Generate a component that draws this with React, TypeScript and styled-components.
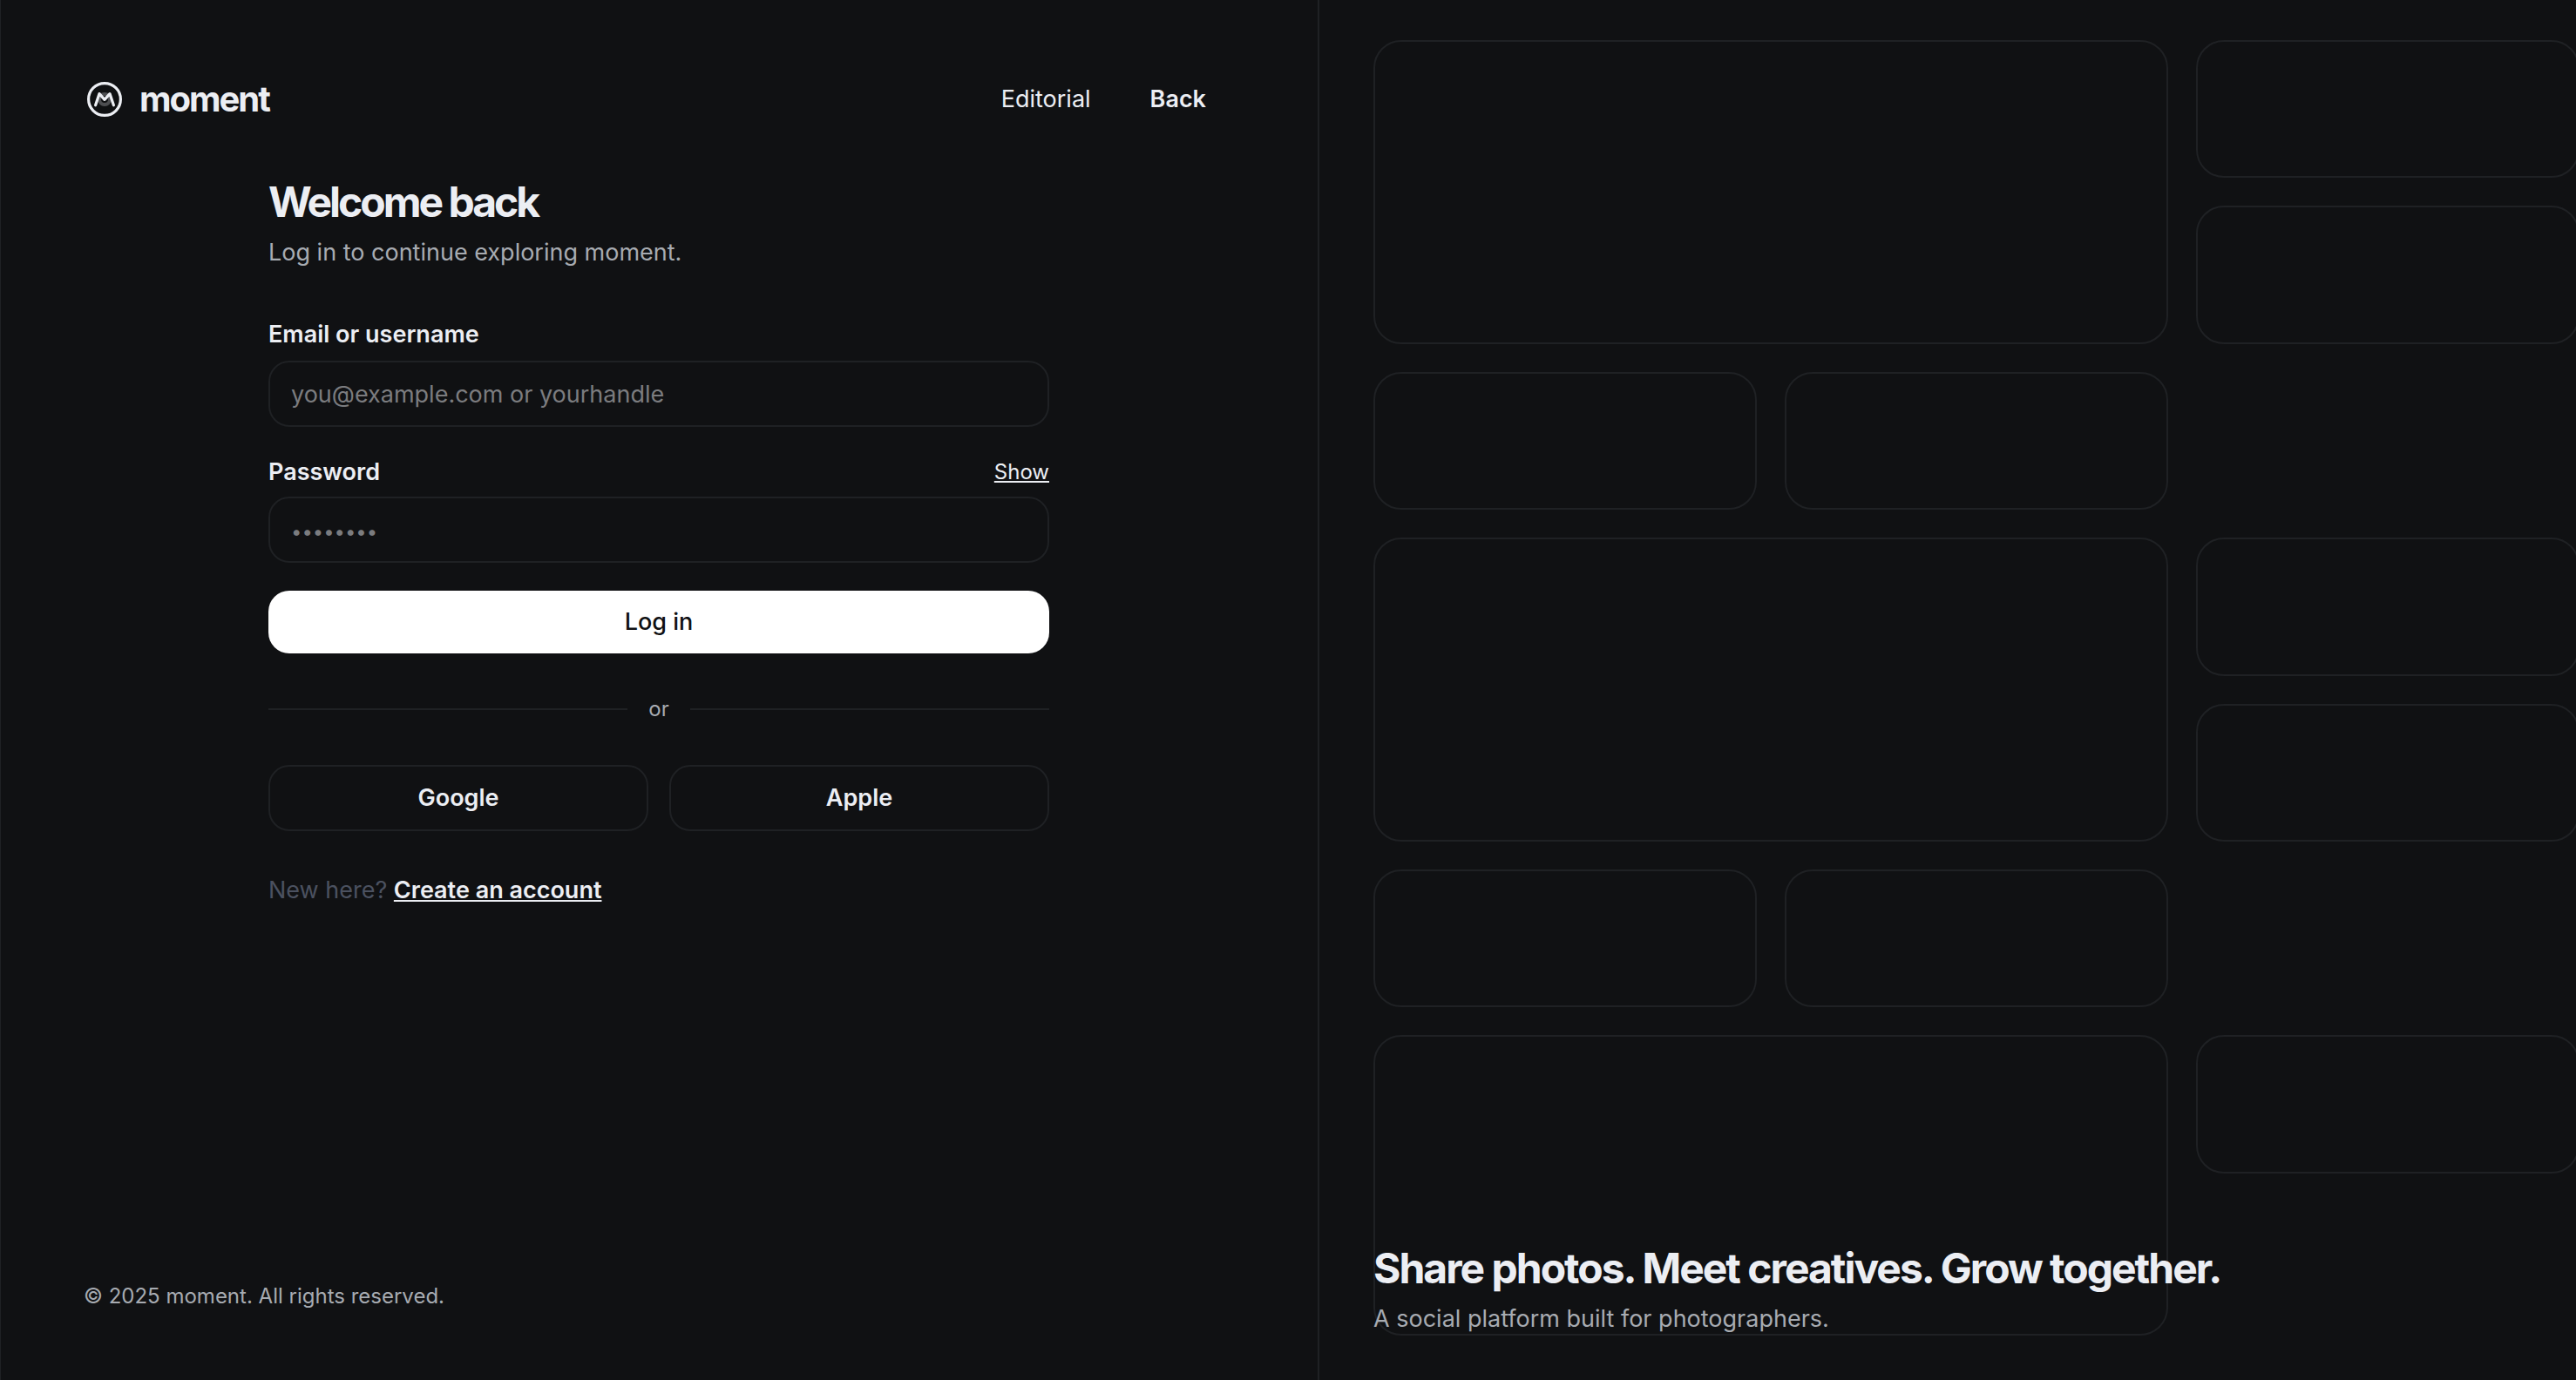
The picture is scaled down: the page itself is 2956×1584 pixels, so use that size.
import React, { useState } from "react";
import styled, { createGlobalStyle } from "styled-components";

const bg = "#101113";
const ink = "#eceef3";
const muted = "#a7abb1";
const line = "#1f2124";

const GlobalStyle = createGlobalStyle`
  *, *::before, *::after { box-sizing: border-box; }
  html { background: ${bg}; }
  body {
    margin: 0;
    overflow: hidden;
    color: ${ink};
    background: ${bg};
    font: 400 27px/40px Inter, "Liberation Sans", sans-serif;
  }
  h1, h2, p { margin: 0; }
  button, input { font: inherit; color: inherit; }
  a { color: inherit; }
`;

const Shell = styled.div`
  display: grid;
  grid-template-columns: 1fr 1fr;
  width: calc(100% + 68px);
  height: 100vh;
`;

const LoginPanel = styled.section`
  display: flex;
  flex-direction: column;
  min-height: 0;
  padding: 78px 96px 78px 95px;
  border-left: 1px solid ${line};
`;

const Header = styled.header`
  display: flex;
  align-items: center;
  justify-content: space-between;
  height: 72px;
  padding-right: 32px;
`;

const Brand = styled.a`
  display: flex;
  align-items: center;
  gap: 16px;
  font-size: 40px;
  font-weight: 700;
  line-height: 48px;
  letter-spacing: -2px;
  text-decoration: none;
`;

const Logo = styled.svg`
  width: 48px;
  height: 48px;
`;

const Nav = styled.nav`
  display: flex;
  align-items: center;
  gap: 68px;
`;

const NavLink = styled.a<{ $strong?: boolean }>`
  font-weight: ${(p) => (p.$strong ? 600 : 400)};
  text-decoration: none;
`;

const FormArea = styled.main`
  width: 896px;
  max-width: 100%;
  margin: 0 auto;
  padding-top: 52px;
`;

const Title = styled.h1`
  font-size: 48px;
  font-weight: 700;
  line-height: 60px;
  letter-spacing: -3px;
`;

const Lead = styled.p`
  margin-top: 8px;
  color: ${muted};
`;

const Form = styled.form`
  display: flex;
  flex-direction: column;
  gap: 32px;
  margin-top: 54px;
`;

const Field = styled.div<{ $gap: number }>`
  display: flex;
  flex-direction: column;
  gap: ${(p) => p.$gap}px;
`;

const LabelRow = styled.div`
  display: flex;
  align-items: center;
  justify-content: space-between;
`;

const Label = styled.label`
  font-weight: 600;
`;

const TextButton = styled.button`
  padding: 0;
  border: 0;
  background: none;
  font-size: 24px;
  line-height: 32px;
  text-decoration: underline;
  cursor: pointer;
`;

const Input = styled.input`
  width: 100%;
  height: 76px;
  padding: 0 24px;
  border: 2px solid ${line};
  border-radius: 24px;
  background: transparent;
  outline: none;
  &::placeholder { color: #7b7c7f; opacity: 1; }
  &[type="password"]::placeholder { font-size: 22px; }
`;

const Button = styled.button<{ $primary?: boolean }>`
  flex: 1 1 ${(p) => (p.$primary ? "auto" : "0")};
  height: ${(p) => (p.$primary ? 72 : 76)}px;
  border: ${(p) => (p.$primary ? "0" : `2px solid ${line}`)};
  border-radius: 24px;
  background: ${(p) => (p.$primary ? "#fff" : "transparent")};
  color: ${(p) => (p.$primary ? bg : ink)};
  font-weight: ${(p) => (p.$primary ? 500 : 600)};
  cursor: pointer;
`;

const Divider = styled.div`
  display: flex;
  align-items: center;
  gap: 24px;
  margin: 48px 0;
  color: ${muted};
  font-size: 24px;
  line-height: 32px;
  &::before, &::after {
    content: "";
    flex: 1;
    height: 2px;
    background: ${line};
  }
`;

const Providers = styled.div`
  display: flex;
  gap: 24px;
`;

const SignUp = styled.p`
  margin-top: 48px;
  color: #4b5160;
  a { color: ${ink}; font-weight: 600; }
`;

const Footer = styled.footer`
  margin-top: auto;
  color: ${muted};
  font-size: 24px;
  line-height: 36px;
`;

const Showcase = styled.section`
  display: grid;
  min-height: 0;
  padding: 46px 64px 50px 62px;
  border-left: 2px solid ${line};
`;

const Mosaic = styled.div`
  grid-area: 1 / 1;
  align-self: start;
  display: grid;
  grid-template-columns: repeat(3, 1fr);
  grid-template-rows: repeat(7, 10vh) 154px;
  gap: 32px;
`;

const Tile = styled.div<{ $large?: boolean }>`
  grid-column: span ${(p) => (p.$large ? 2 : 1)};
  grid-row: span ${(p) => (p.$large ? 2 : 1)};
  border: 2px solid ${line};
  border-radius: 32px;
`;

const Gap = styled.div``;

const Pitch = styled.div`
  grid-area: 1 / 1;
  align-self: end;
`;

const Headline = styled.h2`
  font-size: 48px;
  font-weight: 700;
  line-height: 60px;
  letter-spacing: -2px;
`;

const tiles = [
  "large", "small", "small", "small", "small", "gap",
  "large", "small", "small", "small", "small", "gap",
  "large", "small",
];

export default function App() {
  const [visible, setVisible] = useState(false);
  return (
    <>
      <GlobalStyle />
      <Shell>
        <LoginPanel>
          <Header>
            <Brand href="#">
              <Logo viewBox="0 0 48 48" fill="none" aria-hidden="true">
                <circle cx="24" cy="24" r="18.4" stroke={ink} strokeWidth="3.2" />
                <circle cx="24" cy="24" r="6" stroke={ink} strokeOpacity=".28" strokeWidth="4" />
                <path
                  d="M13.6 30.8 18 17.6 24 24.4 30 17.6 34.4 30.8"
                  stroke={ink}
                  strokeWidth="3.2"
                  strokeLinecap="round"
                  strokeLinejoin="round"
                />
              </Logo>
              moment
            </Brand>
            <Nav>
              <NavLink href="#editorial">Editorial</NavLink>
              <NavLink href="#back" $strong>Back</NavLink>
            </Nav>
          </Header>
          <FormArea>
            <Title>Welcome back</Title>
            <Lead>Log in to continue exploring moment.</Lead>
            <Form onSubmit={(e) => e.preventDefault()}>
              <Field $gap={10}>
                <Label htmlFor="identity">Email or username</Label>
                <Input id="identity" type="text" placeholder="you@example.com or yourhandle" />
              </Field>
              <Field $gap={8}>
                <LabelRow>
                  <Label htmlFor="password">Password</Label>
                  <TextButton type="button" onClick={() => setVisible(!visible)}>
                    {visible ? "Hide" : "Show"}
                  </TextButton>
                </LabelRow>
                <Input id="password" type={visible ? "text" : "password"} placeholder="••••••••" />
              </Field>
              <Button type="submit" $primary>Log in</Button>
            </Form>
            <Divider>or</Divider>
            <Providers>
              <Button type="button">Google</Button>
              <Button type="button">Apple</Button>
            </Providers>
            <SignUp>
              New here? <a href="#signup">Create an account</a>
            </SignUp>
          </FormArea>
          <Footer>© 2025 moment. All rights reserved.</Footer>
        </LoginPanel>
        <Showcase>
          <Mosaic>
            {tiles.map((kind, i) =>
              kind === "gap" ? <Gap key={i} /> : <Tile key={i} $large={kind === "large"} />
            )}
          </Mosaic>
          <Pitch>
            <Headline>Share photos. Meet creatives. Grow together.</Headline>
            <Lead>A social platform built for photographers.</Lead>
          </Pitch>
        </Showcase>
      </Shell>
    </>
  );
}
